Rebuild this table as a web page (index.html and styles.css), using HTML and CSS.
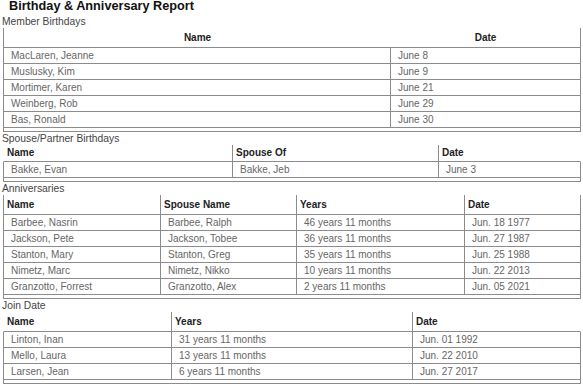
FILE: index.html
```html
<!DOCTYPE html>
<html>
<head>
<meta charset="utf-8">
<link rel="stylesheet" href="styles.css">
</head>
<body>
<div class="title">Birthday &amp; Anniversary Report</div>

<div class="label">Member Birthdays</div>
<div class="tbl t1">
  <div class="thead boxed center h19">
    <div class="hc">Name</div>
    <div class="hc">Date</div>
  </div>
  <div class="tbody">
    <div class="row"><div class="cell">MacLaren, Jeanne</div><div class="cell">June 8</div></div>
    <div class="row"><div class="cell">Muslusky, Kim</div><div class="cell">June 9</div></div>
    <div class="row"><div class="cell">Mortimer, Karen</div><div class="cell">June 21</div></div>
    <div class="row"><div class="cell">Weinberg, Rob</div><div class="cell">June 29</div></div>
    <div class="row"><div class="cell">Bas, Ronald</div><div class="cell">June 30</div></div>
  </div>
</div>

<div class="label">Spouse/Partner Birthdays</div>
<div class="tbl t2">
  <div class="thead h16">
    <div class="hc div">Name</div>
    <div class="hc div">Spouse Of</div>
    <div class="hc">Date</div>
  </div>
  <div class="tbody">
    <div class="row"><div class="cell">Bakke, Evan</div><div class="cell">Bakke, Jeb</div><div class="cell">June 3</div></div>
  </div>
</div>

<div class="label">Anniversaries</div>
<div class="tbl t3">
  <div class="thead boxed h19">
    <div class="hc div">Name</div>
    <div class="hc div">Spouse Name</div>
    <div class="hc div">Years</div>
    <div class="hc">Date</div>
  </div>
  <div class="tbody">
    <div class="row"><div class="cell">Barbee, Nasrin</div><div class="cell">Barbee, Ralph</div><div class="cell">46 years 11 months</div><div class="cell">Jun. 18 1977</div></div>
    <div class="row"><div class="cell">Jackson, Pete</div><div class="cell">Jackson, Tobee</div><div class="cell">36 years 11 months</div><div class="cell">Jun. 27 1987</div></div>
    <div class="row"><div class="cell">Stanton, Mary</div><div class="cell">Stanton, Greg</div><div class="cell">35 years 11 months</div><div class="cell">Jun. 25 1988</div></div>
    <div class="row"><div class="cell">Nimetz, Marc</div><div class="cell">Nimetz, Nikko</div><div class="cell">10 years 11 months</div><div class="cell">Jun. 22 2013</div></div>
    <div class="row"><div class="cell">Granzotto, Forrest</div><div class="cell">Granzotto, Alex</div><div class="cell">2 years 11 months</div><div class="cell">Jun. 05 2021</div></div>
  </div>
</div>

<div class="label">Join Date</div>
<div class="tbl t4">
  <div class="thead h19">
    <div class="hc div">Name</div>
    <div class="hc div">Years</div>
    <div class="hc">Date</div>
  </div>
  <div class="tbody">
    <div class="row"><div class="cell">Linton, Inan</div><div class="cell">31 years 11 months</div><div class="cell">Jun. 01 1992</div></div>
    <div class="row"><div class="cell">Mello, Laura</div><div class="cell">13 years 11 months</div><div class="cell">Jun. 22 2010</div></div>
    <div class="row"><div class="cell">Larsen, Jean</div><div class="cell">6 years 11 months</div><div class="cell">Jun. 27 2017</div></div>
  </div>
</div>
</body>
</html>
```

FILE: styles.css
```css
* { box-sizing: border-box; }

body {
  margin: 0;
  background: #fff;
  font-family: "Liberation Sans", Arial, sans-serif;
  font-size: 10px;
  color: #666;
}

.title {
  font-size: 12.7px;
  font-weight: bold;
  color: #111;
  line-height: 12px;
  padding-left: 9px;
  margin-bottom: 3px;
}

.label {
  font-size: 10.3px;
  line-height: 13px;
  height: 13px;
  color: #444;
  padding-left: 2px;
}

.tbl {
  margin-left: 3px;
  width: 578px;
}

.thead {
  display: grid;
  border-left: 1px solid transparent;
  border-right: 1px solid transparent;
  border-bottom: 1px solid #8c8c8c;
  color: #222;
  font-weight: bold;
}

.thead.boxed {
  border-left-color: #8c8c8c;
  border-right-color: #8c8c8c;
}

.thead.h19 { height: 20px; line-height: 19px; }
.thead.h16 { height: 17px; line-height: 16px; }

.thead.center .hc { text-align: center; padding-left: 0; }

.hc {
  padding-left: 3px;
  white-space: nowrap;
}

.hc.div { border-right: 1px solid #8c8c8c; }

.tbody {
  border: 1px solid #8c8c8c;
  border-top: none;
  padding-bottom: 3px;
}

.row {
  display: grid;
  height: 16px;
  line-height: 15px;
  border-bottom: 1px solid #8c8c8c;
}

.cell {
  padding-left: 7px;
  white-space: nowrap;
  overflow: hidden;
  border-right: 1px solid #8c8c8c;
}

.cell:last-child { border-right: none; }

.t1 .thead, .t1 .row { grid-template-columns: 387px 1fr; }
.t2 .thead, .t2 .row { grid-template-columns: 229px 206px 1fr; }
.t3 .thead, .t3 .row { grid-template-columns: 157px 136px 168px 1fr; }
.t4 .thead, .t4 .row { grid-template-columns: 168px 241px 1fr; }
```
